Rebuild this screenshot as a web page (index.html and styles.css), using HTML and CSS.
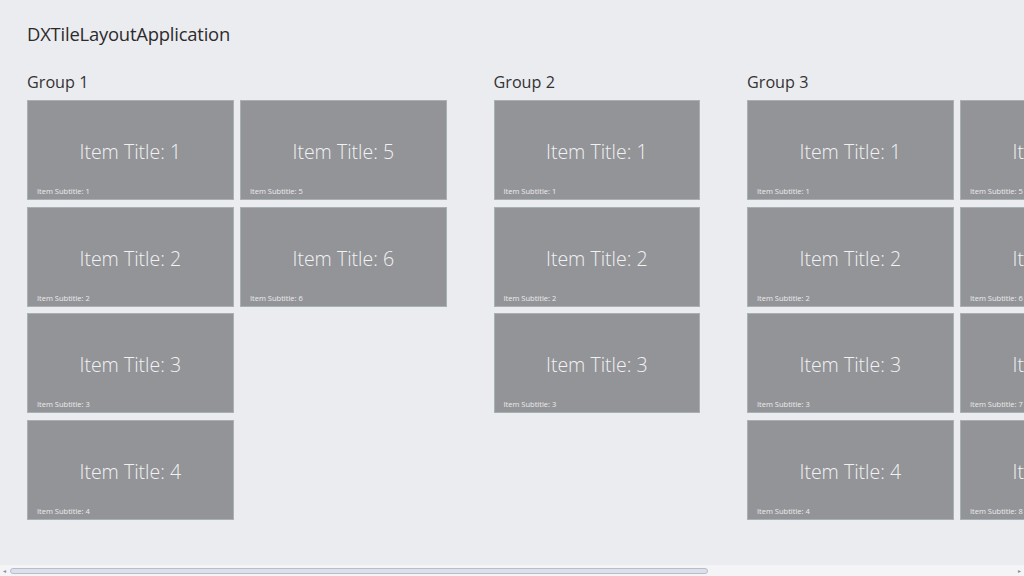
FILE: index.html
```html
<!DOCTYPE html>
<html>
<head>
<meta charset="utf-8">
<link rel="stylesheet" href="styles.css">
</head>
<body>
<div class="app">
  <main class="content">
    <h1 class="app-title">DXTileLayoutApplication</h1>
    <div class="groups">
      <section class="group">
        <h2 class="group-title">Group 1</h2>
        <div class="tiles">
          <div class="tile"><div class="tile-title">Item Title: 1</div><div class="tile-sub">Item Subtitle: 1</div></div>
          <div class="tile"><div class="tile-title">Item Title: 2</div><div class="tile-sub">Item Subtitle: 2</div></div>
          <div class="tile"><div class="tile-title">Item Title: 3</div><div class="tile-sub">Item Subtitle: 3</div></div>
          <div class="tile"><div class="tile-title">Item Title: 4</div><div class="tile-sub">Item Subtitle: 4</div></div>
          <div class="tile"><div class="tile-title">Item Title: 5</div><div class="tile-sub">Item Subtitle: 5</div></div>
          <div class="tile"><div class="tile-title">Item Title: 6</div><div class="tile-sub">Item Subtitle: 6</div></div>
        </div>
      </section>
      <section class="group">
        <h2 class="group-title">Group 2</h2>
        <div class="tiles">
          <div class="tile"><div class="tile-title">Item Title: 1</div><div class="tile-sub">Item Subtitle: 1</div></div>
          <div class="tile"><div class="tile-title">Item Title: 2</div><div class="tile-sub">Item Subtitle: 2</div></div>
          <div class="tile"><div class="tile-title">Item Title: 3</div><div class="tile-sub">Item Subtitle: 3</div></div>
        </div>
      </section>
      <section class="group">
        <h2 class="group-title">Group 3</h2>
        <div class="tiles">
          <div class="tile"><div class="tile-title">Item Title: 1</div><div class="tile-sub">Item Subtitle: 1</div></div>
          <div class="tile"><div class="tile-title">Item Title: 2</div><div class="tile-sub">Item Subtitle: 2</div></div>
          <div class="tile"><div class="tile-title">Item Title: 3</div><div class="tile-sub">Item Subtitle: 3</div></div>
          <div class="tile"><div class="tile-title">Item Title: 4</div><div class="tile-sub">Item Subtitle: 4</div></div>
          <div class="tile"><div class="tile-title">Item Title: 5</div><div class="tile-sub">Item Subtitle: 5</div></div>
          <div class="tile"><div class="tile-title">Item Title: 6</div><div class="tile-sub">Item Subtitle: 6</div></div>
          <div class="tile"><div class="tile-title">Item Title: 7</div><div class="tile-sub">Item Subtitle: 7</div></div>
          <div class="tile"><div class="tile-title">Item Title: 8</div><div class="tile-sub">Item Subtitle: 8</div></div>
        </div>
      </section>
    </div>
  </main>
  <div class="hscroll">
    <span class="arrow">&#9666;</span>
    <div class="track"><div class="thumb"></div></div>
    <span class="arrow">&#9656;</span>
  </div>
</div>
</body>
</html>
```
FILE: styles.css
```css
html, body {
  margin: 0;
  padding: 0;
  width: 1024px;
  height: 576px;
  overflow: hidden;
  background: #ebecf0;
  font-family: "Open Sans", "Noto Sans", sans-serif;
}

.app {
  display: flex;
  flex-direction: column;
  height: 576px;
}

.content {
  flex: 1;
  overflow: hidden;
  padding: 0 0 0 27px;
}

.app-title {
  margin: 0;
  padding-top: 21px;
  height: 51px;
  box-sizing: border-box;
  font-size: 18.4px;
  font-weight: 400;
  color: #2b2b2b;
  line-height: 26px;
  letter-spacing: -0.2px;
}

.groups {
  display: flex;
  gap: 47px;
}

.group {
  flex: none;
}

.group-title {
  margin: 0;
  height: 49px;
  padding-top: 19px;
  box-sizing: border-box;
  font-size: 16.2px;
  font-weight: 400;
  color: #333;
  line-height: 24px;
}

.tiles {
  display: grid;
  grid-auto-flow: column;
  grid-template-rows: repeat(4, 100px);
  grid-auto-columns: 206.5px;
  column-gap: 6.5px;
  row-gap: 6.67px;
}

.tile {
  position: relative;
  background: #939498;
  border: 1px solid #a7b0b4;
  box-sizing: border-box;
  display: flex;
  flex-direction: column;
  color: #f2f2f2;
}

.tile-title {
  flex: 1;
  display: flex;
  align-items: center;
  justify-content: center;
  padding-top: 16px;
  font-size: 19.5px;
  font-weight: 300;
  white-space: nowrap;
}

.tile-sub {
  font-size: 7.5px;
  padding: 0 0 3px 9px;
  color: #ececec;
  white-space: nowrap;
}

.hscroll {
  height: 11px;
  background: #f4f4f6;
  display: flex;
  align-items: center;
  gap: 4px;
  padding: 0 3px;
}

.arrow {
  font-size: 6px;
  color: #8a8d96;
  line-height: 1;
}

.track {
  flex: 1;
  height: 6px;
}

.thumb {
  width: 698px;
  height: 6px;
  box-sizing: border-box;
  border: 1px solid #b8bdcc;
  border-radius: 3px;
  background: #dde0ea;
}
```
